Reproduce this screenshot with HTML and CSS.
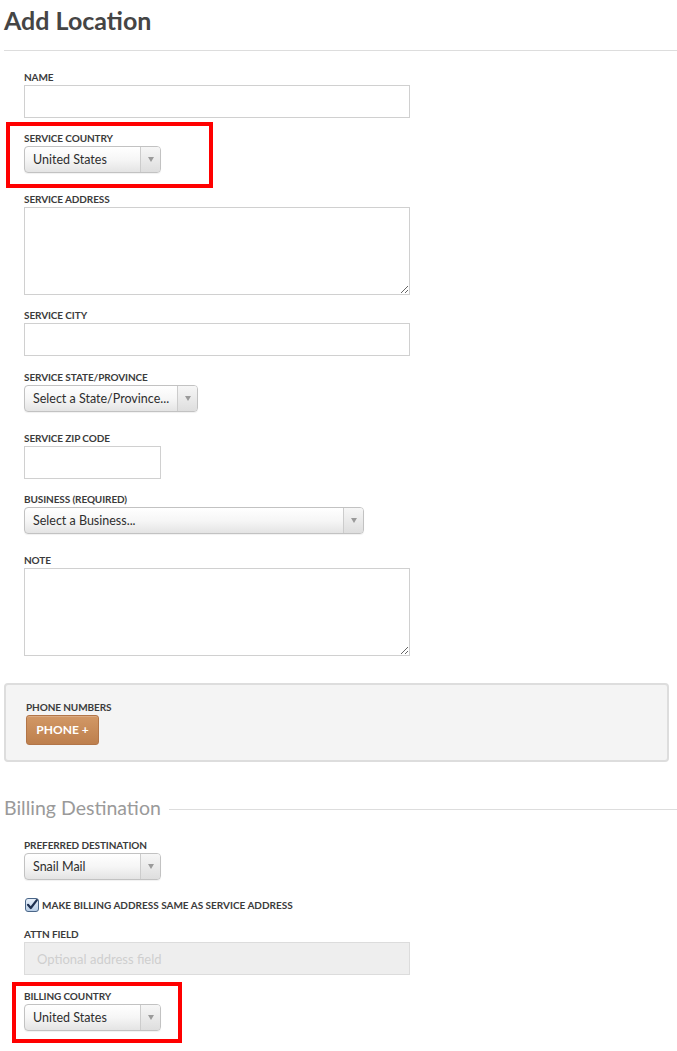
FILE: index.html
```html
<!DOCTYPE html>
<html>
<head>
<meta charset="utf-8">
<title>Add Location</title>
<link rel="stylesheet" href="styles.css">
</head>
<body>
<div class="page">
  <h1 class="title">Add Location</h1>

  <div class="fields">
    <div class="field">
      <label class="lbl">Name</label>
      <div class="input w-full"></div>
    </div>

    <div class="field field-select marked">
      <span class="mark mark-one"></span>
      <label class="lbl">Service Country</label>
      <div class="select w-short"><span class="select-text">United States</span><span class="select-arrow"></span></div>
    </div>

    <div class="field">
      <label class="lbl">Service Address</label>
      <textarea class="textarea w-full"></textarea>
    </div>

    <div class="field field-input">
      <label class="lbl">Service City</label>
      <div class="input w-full"></div>
    </div>

    <div class="field field-select">
      <label class="lbl">Service State/Province</label>
      <div class="select w-state"><span class="select-text">Select a State/Province...</span><span class="select-arrow"></span></div>
    </div>

    <div class="field">
      <label class="lbl">Service Zip Code</label>
      <div class="input w-short"></div>
    </div>

    <div class="field field-select">
      <label class="lbl">Business (Required)</label>
      <div class="select w-business"><span class="select-text">Select a Business...</span><span class="select-arrow"></span></div>
    </div>

    <div class="field field-last">
      <label class="lbl">Note</label>
      <textarea class="textarea w-full"></textarea>
    </div>
  </div>

  <div class="phone-box">
    <label class="lbl">Phone Numbers</label>
    <button class="btn-phone">PHONE +</button>
  </div>

  <h2 class="section-title">Billing Destination</h2>

  <div class="fields billing">
    <div class="field field-select-sm">
      <label class="lbl">Preferred Destination</label>
      <div class="select w-short"><span class="select-text">Snail Mail</span><span class="select-arrow"></span></div>
    </div>

    <div class="check-row">
      <svg class="check" width="14" height="14" viewBox="0 0 14 14">
        <defs>
          <linearGradient id="cb" x1="0" y1="0" x2="0" y2="1">
            <stop offset="0" stop-color="#e9f1fb"/>
            <stop offset="1" stop-color="#b7cde6"/>
          </linearGradient>
        </defs>
        <rect x="0.5" y="0.5" width="13" height="13" rx="2.5" fill="url(#cb)" stroke="#4a6688"/>
        <path d="M3 6.8 L5.8 10 L11.8 2.2" fill="none" stroke="#1e3050" stroke-width="2.2" stroke-linecap="round" stroke-linejoin="round"/>
      </svg>
      <span class="check-text">Make billing address same as service address</span>
    </div>

    <div class="field field-input">
      <label class="lbl">Attn Field</label>
      <div class="input input-disabled w-full">Optional address field</div>
    </div>

    <div class="field marked">
      <span class="mark mark-two"></span>
      <label class="lbl">Billing Country</label>
      <div class="select w-short"><span class="select-text">United States</span><span class="select-arrow"></span></div>
    </div>
  </div>
</div>
</body>
</html>
```

FILE: styles.css
```css
* { box-sizing: border-box; }

body {
  margin: 0;
  background: #fff;
  font-family: "Lato", "Open Sans", "Liberation Sans", sans-serif;
  color: #333;
}

.page {
  padding-left: 4px;
}

.title {
  margin: 0;
  height: 51px;
  padding-bottom: 10px;
  font-size: 25px;
  line-height: 40px;
  font-weight: 700;
  color: #454545;
  border-bottom: 1px solid #dddddd;
}

.fields {
  padding: 20px 0 0 20px;
}

.field {
  position: relative;
  margin-bottom: 14px;
}

.field-input { margin-bottom: 15px; }
.field-select { margin-bottom: 20px; }
.field-select-sm { margin-bottom: 18px; }
.field-last { margin-bottom: 0; }

.lbl {
  display: block;
  height: 12px;
  margin-bottom: 2px;
  font-size: 10px;
  line-height: 12px;
  font-weight: 700;
  text-transform: uppercase;
  color: #3b3b3b;
  letter-spacing: -0.1px;
}

.input {
  display: block;
  height: 33px;
  border: 1px solid #d0d0d0;
  background: #fff;
}

.input-disabled {
  background: #eeeeee;
  border-color: #dcdcdc;
  color: #cfcfcf;
  font-size: 13px;
  line-height: 33px;
  padding-left: 12px;
}

.textarea {
  display: block;
  height: 88px;
  border: 1px solid #d0d0d0;
  background: #fff;
  resize: both;
  margin: 0;
  font: inherit;
}

.w-full { width: 386px; }
.w-short { width: 137px; }
.w-state { width: 174px; }
.w-business { width: 340px; }

.select {
  display: flex;
  height: 27px;
  border: 1px solid #c2c2c2;
  border-radius: 4px;
  background: linear-gradient(#ffffff 0%, #f6f6f6 50%, #e4e4e4 100%);
  box-shadow: 0 1px 1px rgba(0,0,0,0.06);
}

.select-text {
  flex: 1;
  padding-left: 8px;
  font-size: 12.5px;
  line-height: 26px;
  color: #2e2e2e;
  white-space: nowrap;
  overflow: hidden;
}

.select-arrow {
  width: 20px;
  border-left: 1px solid #cccccc;
  display: flex;
  align-items: center;
  justify-content: center;
  background: linear-gradient(#f6f6f6, #dedede);
  border-radius: 0 3px 3px 0;
}

.select-arrow::before {
  content: "";
  width: 0;
  height: 0;
  border-left: 3.5px solid transparent;
  border-right: 3.5px solid transparent;
  border-top: 5px solid #9a9a9a;
}

.mark {
  position: absolute;
  border: 4px solid #ff0000;
  pointer-events: none;
}

.mark-one {
  left: -18px;
  top: -10px;
  width: 207px;
  height: 66px;
}

.mark-two {
  left: -12px;
  top: -8px;
  width: 170px;
  height: 61px;
}

.phone-box {
  margin: 27px 8px 0 0;
  padding: 16px 20px 15px 20px;
  background: #f4f4f4;
  border: 2px solid #dddddd;
  border-radius: 4px;
}

.btn-phone {
  display: block;
  height: 30px;
  width: 73px;
  padding: 0;
  border: 1px solid #b27548;
  border-radius: 3px;
  background: linear-gradient(#d29866, #bd7f4d);
  color: #fff;
  font-family: inherit;
  font-size: 12px;
  font-weight: 700;
  line-height: 28px;
  text-align: center;
  box-shadow: inset 0 1px 0 rgba(255,255,255,0.2);
}

.section-title {
  display: flex;
  align-items: center;
  gap: 8px;
  margin: 34px 0 0 0;
  height: 24px;
  font-size: 19.5px;
  line-height: 24px;
  font-weight: 400;
  color: #9a9a9a;
}

.section-title::after {
  content: "";
  flex: 1;
  height: 1px;
  margin-top: 2px;
  background: #dddddd;
}

.billing {
  padding-top: 19px;
}

.check-row {
  display: flex;
  align-items: center;
  gap: 3px;
  height: 14px;
  margin-bottom: 16px;
  padding-left: 1px;
}

.check { display: block; flex: none; }

.check-text {
  font-size: 10px;
  font-weight: 700;
  text-transform: uppercase;
  color: #3b3b3b;
  line-height: 14px;
}
```
